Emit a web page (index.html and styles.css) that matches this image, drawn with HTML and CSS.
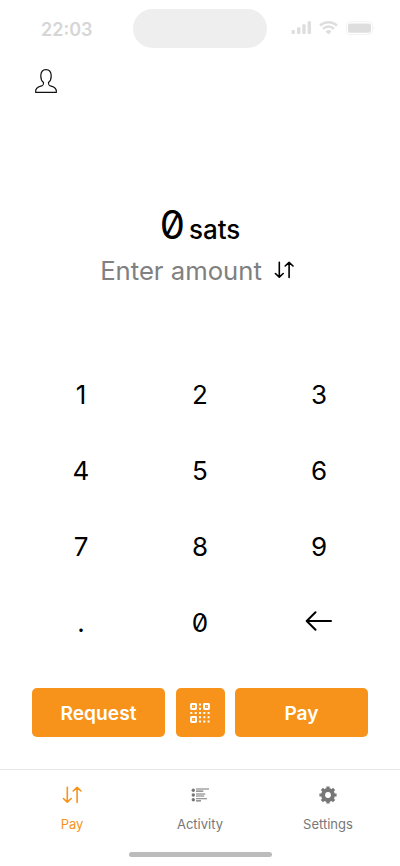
FILE: index.html
```html
<!DOCTYPE html>
<html lang="en">
<head>
<meta charset="utf-8">
<title>Wallet</title>
<link rel="stylesheet" href="styles.css">
</head>
<body>
<div class="app">
  <header class="status">
    <div class="time">22:03</div>
    <div class="island"></div>
    <svg class="system" width="84" height="16" viewBox="0 0 84 16">
      <g fill="#dedede">
        <rect x="0.5" y="10" width="3.4" height="4" rx="1"/>
        <rect x="6" y="7.2" width="3.4" height="6.8" rx="1"/>
        <rect x="11.3" y="4.3" width="3.4" height="9.7" rx="1"/>
        <rect x="16.6" y="1.3" width="3.4" height="12.7" rx="1"/>
        <rect x="57" y="3.4" width="23" height="9.4" rx="2.2"/>
      </g>
      <g fill="none" stroke="#dedede" stroke-width="2.5">
        <path d="M29 5.6a12.3 12.3 0 0 1 17 0"/>
        <path d="M32 8.8a8 8 0 0 1 11 0"/>
      </g>
      <path d="M34.6 11.4a4.2 4.2 0 0 1 5.8 0L37.5 14.4z" fill="#dedede"/>
      <rect x="55.3" y="1.7" width="26.4" height="12.8" rx="4" fill="none" stroke="#f3f3f3"/>
      <path d="M82.8 6.4q1.4 1.7 0 3.6z" fill="#efefef"/>
    </svg>
  </header>

  <div class="top">
    <svg width="24" height="26" viewBox="0 0 24 26" fill="none" stroke="#111" stroke-width="1.2" stroke-linejoin="round">
      <path d="M1.6 24.3C1.3 20.4 3.2 19.1 6.8 18.2C9.3 17.6 9.6 17 9.5 14.6C7.6 13.2 6.8 11 6.8 8C6.8 3.6 8.4 1.6 12 1.6S17.2 3.6 17.2 8C17.2 11 16.4 13.2 14.5 14.6C14.4 17 14.7 17.6 17.2 18.2C20.8 19.1 22.7 20.4 22.4 24.3Z"/>
    </svg>
  </div>

  <main class="amount">
    <div class="value"><span class="digits">0</span><span class="unit">sats</span></div>
    <div class="hint">
      <span>Enter amount</span>
      <svg width="20" height="18" viewBox="0 0 20 18" fill="none" stroke="#000" stroke-width="1.6" stroke-linecap="round" stroke-linejoin="round">
        <path d="M5.3 1.2V16M1.4 12.5L5.3 16.2L9.2 12.5M15.1 16.4V1.4M11.2 5L15.1 1.3L19 5"/>
      </svg>
    </div>
  </main>

  <div class="keypad">
    <div class="key">1</div><div class="key">2</div><div class="key">3</div>
    <div class="key">4</div><div class="key">5</div><div class="key">6</div>
    <div class="key">7</div><div class="key">8</div><div class="key">9</div>
    <div class="key">.</div><div class="key">0</div>
    <div class="key">
      <svg class="back" width="28" height="20" viewBox="0 0 28 20" fill="none" stroke="#000" stroke-width="2" stroke-linecap="round" stroke-linejoin="round">
        <path d="M26 10H2M10.5 1.2L1.7 10L10.5 18.8"/>
      </svg>
    </div>
  </div>

  <div class="actions">
    <div class="button">Request</div>
    <div class="button scan">
      <svg width="20" height="20" viewBox="0 0 20 20">
        <g fill="none" stroke="#fff" stroke-width="2">
          <rect x="1.1" y="1.1" width="4.9" height="4.9" rx=".4"/>
          <rect x="14" y="1.1" width="4.9" height="4.9" rx=".4"/>
          <rect x="1.1" y="14" width="4.9" height="4.9" rx=".4"/>
        </g>
        <g fill="#fff">
          <path d="M2.8 2.8h1.4v1.4H2.8zM15.8 2.8h1.4v1.4h-1.4zM2.8 15.8h1.4v1.4H2.8z" opacity=".45"/>
          <path d="M9 .4h2v2H9zM9 4.8h2v2H9zM.3 9h2v2h-2zM4.7 9h2v2h-2zM9 9h2v2H9zM13.3 9h2v2h-2zM17.6 9h2v2h-2zM9 13.3h2v2H9zM13.3 13.3h2v2h-2zM17.6 13.3h2v2h-2zM9 17.6h2v2H9zM13.3 17.6h2v2h-2zM17.6 17.6h2v2h-2z"/>
        </g>
      </svg>
    </div>
    <div class="button">Pay</div>
  </div>

  <nav class="tabs">
    <div class="tab active">
      <svg width="20" height="18" viewBox="0 0 20 18" fill="none" stroke="currentColor" stroke-width="1.6" stroke-linecap="round" stroke-linejoin="round">
        <path d="M5.3 1.2V16M1.4 12.5L5.3 16.2L9.2 12.5M15.1 16.4V1.4M11.2 5L15.1 1.3L19 5"/>
      </svg>
      <span>Pay</span>
    </div>
    <div class="tab">
      <svg width="18" height="18" viewBox="0 0 18 18" fill="currentColor">
        <circle cx="2.3" cy="4.2" r="1.7"/><circle cx="2.3" cy="9" r="1.7"/><circle cx="2.3" cy="13.8" r="1.7"/>
        <path d="M5 2.5h13v1.1H5zM5 4.6h7.3v1.1H5zM5 7.4h9.3v1.1H5zM5 9.5h8.2v1.1H5zM5 12.2h11v1.1H5zM5 14.3h5v1.1H5z"/>
      </svg>
      <span>Activity</span>
    </div>
    <div class="tab">
      <svg width="18" height="18" viewBox="0 0 18 18">
        <g fill="none" stroke="currentColor">
          <circle cx="9" cy="9" r="4.9" stroke-width="4"/>
          <path d="M9 .4v3M9 14.6v3M.4 9h3M14.6 9h3M2.9 2.9l2 2M13.1 13.1l2 2M15.1 2.9l-2 2M4.9 13.1l-2 2" stroke-width="3.2" stroke-linejoin="round"/>
        </g>
      </svg>
      <span>Settings</span>
    </div>
  </nav>
  <div class="home"></div>
</div>
</body>
</html>
```
FILE: styles.css
```css
* { box-sizing: border-box; }

body {
  margin: 0;
  background: #fff;
  color: #000;
  font-family: Inter, "Liberation Sans", sans-serif;
  font-feature-settings: "zero" 1;
}

.app {
  display: flex;
  flex-direction: column;
  width: 400px;
  height: 866px;
  overflow: hidden;
}

svg { display: block; flex: none; }

.status {
  display: grid;
  grid-template-columns: 133px 134px 133px;
  height: 60px;
  padding-top: 9px;
}

.time {
  padding: 10px 0 0 41px;
  color: #d6d6d6;
  font-size: 18px;
  font-weight: 600;
  line-height: 22px;
  font-feature-settings: normal;
}

.island {
  height: 39px;
  border-radius: 20px;
  background: #eee;
}

.system { margin: 11px 0 0 24px; }

.top {
  height: 140px;
  padding: 8px 0 0 34px;
}

.amount {
  display: flex;
  flex-direction: column;
  align-items: center;
  height: 157px;
}

.value {
  display: flex;
  align-items: baseline;
  gap: 4px;
  height: 51px;
  line-height: 50px;
}

.digits { font-size: 40px; }
.unit { font-size: 26px; font-weight: 500; }

.hint {
  display: flex;
  align-items: center;
  gap: 12px;
  height: 38px;
  padding-right: 6px;
  color: #808080;
  font-size: 25.7px;
}

.keypad {
  display: grid;
  grid-template-columns: repeat(3, 119px);
  grid-auto-rows: 75.9px;
  justify-content: center;
  height: 331px;
}

.key {
  display: flex;
  align-items: center;
  justify-content: center;
  font-size: 26px;
}

.back { margin-bottom: 4px; }

.actions {
  display: grid;
  grid-template-columns: 133px 49px 133px;
  justify-content: space-between;
  height: 81px;
  padding: 0 32px;
}

.button {
  display: flex;
  align-items: center;
  justify-content: center;
  height: 49px;
  padding-top: 1px;
  border-radius: 5px;
  background: #f7931a;
  color: #fff;
  font-size: 19.2px;
  font-weight: 600;
}

.scan { padding-top: 0; }

.tabs {
  display: grid;
  grid-template-columns: repeat(3, 128px);
  justify-content: center;
  height: 83px;
  border-top: 1px solid #e6e6e6;
}

.tab {
  display: flex;
  flex-direction: column;
  align-items: center;
  gap: 12px;
  padding-top: 16px;
  color: #777;
  font-size: 13px;
  line-height: 16px;
}

.tab.active { color: #f7931a; }

.home {
  flex: none;
  align-self: center;
  width: 143px;
  height: 5px;
  border-radius: 3px;
  background: #bcbcbc;
}
```
